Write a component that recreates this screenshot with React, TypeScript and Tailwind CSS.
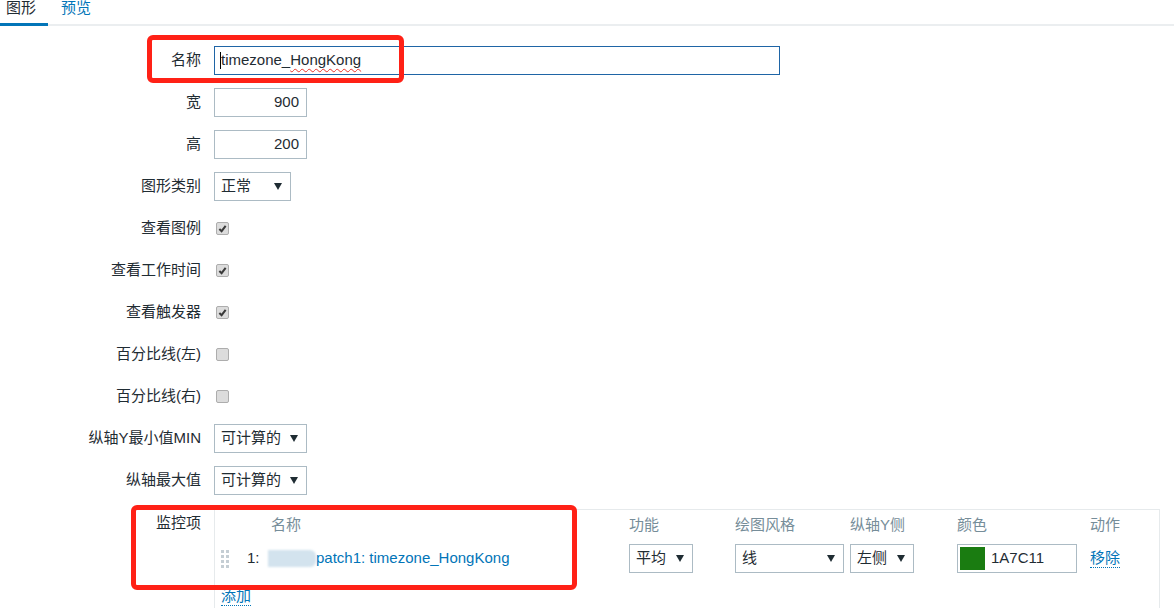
import React from 'react';

const Arrow = () => (
  <svg width="8" height="7" viewBox="0 0 8 7" className="shrink-0">
    <polygon points="0,0 8,0 4,7" fill="#1f2c33" />
  </svg>
);

const Select: React.FC<{ value: string; w: string }> = ({ value, w }) => (
  <div className={`h-[29px] border border-[#acbbc4] bg-white flex items-center justify-between pl-[6px] pr-[8px] ${w}`}>
    <span>{value}</span>
    <Arrow />
  </div>
);

const Checkbox: React.FC<{ checked?: boolean }> = ({ checked }) => (
  <span className="ml-[2px] w-[13px] h-[13px] rounded-[2px] border border-[#adadad] bg-[#dcdcdc] flex items-center justify-center">
    {checked && (
      <svg width="9" height="9" viewBox="0 0 10 10">
        <path d="M1.5 5.5 L4 8 L8.5 2" stroke="#3a3a3a" strokeWidth="2.2" fill="none" />
      </svg>
    )}
  </span>
);

const Row: React.FC<{ label: string; children: React.ReactNode }> = ({ label, children }) => (
  <div className="flex items-center h-[29px]">
    <div className="w-[201px] text-right whitespace-nowrap">{label}</div>
    <div className="ml-[13px] flex items-center">{children}</div>
  </div>
);

const NumInput: React.FC<{ value: string }> = ({ value }) => (
  <div className="w-[93px] h-[29px] border border-[#acbbc4] flex items-center justify-end pr-[7px]">{value}</div>
);

const Handle = () => (
  <div className="grid grid-cols-2 gap-x-[2px] gap-y-[2px] w-[8px]">
    {Array.from({ length: 8 }).map((_, i) => (
      <span key={i} className="w-[3px] h-[3px] bg-[#c5ced4]" />
    ))}
  </div>
);

const App: React.FC = () => {
  return (
    <div className="relative w-[1174px] h-[608px] overflow-hidden bg-white text-[15px] text-[#1f2c33] font-['Liberation_Sans','Noto_Sans_CJK_SC',sans-serif]">
      {/* tabs */}
      <div className="flex h-[26px] border-b-2 border-[#ebeef0]">
        <div className="w-[48px] pl-[6px] leading-[16px] border-b-[3px] border-[#0275b8] -mb-[2px]">图形</div>
        <div className="pl-[13px] leading-[16px] text-[#0275b8]">预览</div>
      </div>

      <div className="flex flex-col gap-[13px] pt-[20px]">
        <Row label="名称">
          <div className="w-[566px] h-[29px] border border-[#1f65a6] flex items-center pl-[5px]">
            <span className="w-[1px] h-[17px] bg-black" />
            <span>timezone_</span>
            <span className="underline decoration-wavy decoration-[#e8322a] decoration-1 underline-offset-[3px]">HongKong</span>
          </div>
        </Row>
        <Row label="宽"><NumInput value="900" /></Row>
        <Row label="高"><NumInput value="200" /></Row>
        <Row label="图形类别"><Select value="正常" w="w-[77px]" /></Row>
        <Row label="查看图例"><Checkbox checked /></Row>
        <Row label="查看工作时间"><Checkbox checked /></Row>
        <Row label="查看触发器"><Checkbox checked /></Row>
        <Row label="百分比线(左)"><Checkbox /></Row>
        <Row label="百分比线(右)"><Checkbox /></Row>
        <Row label="纵轴Y最小值MIN"><Select value="可计算的" w="w-[93px]" /></Row>
        <Row label="纵轴最大值"><Select value="可计算的" w="w-[93px]" /></Row>

        <div className="flex items-start mt-[1px]">
          <div className="w-[201px] text-right pt-[3px]">监控项</div>
          <div className="ml-[13px] w-[946px] h-[120px] border-t border-l border-r border-[#e6eaec] pl-[6px]">
            <div className="grid grid-cols-[26px_21px_361px_106px_115px_107px_133px_1fr] pt-[6px] leading-[18px] text-[#768d99]">
              <span />
              <span />
              <span className="pl-[3px]">名称</span>
              <span>功能</span>
              <span>绘图风格</span>
              <span>纵轴Y侧</span>
              <span>颜色</span>
              <span>动作</span>
            </div>
            <div className="grid grid-cols-[26px_21px_361px_106px_115px_107px_133px_1fr] items-center mt-[10px] h-[29px]">
              <Handle />
              <span>1:</span>
              <span className="flex items-center text-[#0275b8]">
                <span className="w-[48px] h-[17px] bg-[#d3e3ee] blur-[1px] rounded-r-[6px]" />
                <span>patch1: timezone_HongKong</span>
              </span>
              <Select value="平均" w="w-[64px]" />
              <Select value="线" w="w-[109px]" />
              <Select value="左侧" w="w-[64px]" />
              <div className="w-[120px] h-[29px] border border-[#acbbc4] flex items-center pl-[2px]">
                <span className="w-[25px] h-[23px] bg-[#1a7c11]" />
                <span className="ml-[6px]">1A7C11</span>
              </div>
              <span className="text-[#0275b8] leading-[18px] border-b border-dotted border-[#0275b8] w-fit">移除</span>
            </div>
            <div className="mt-[12px]">
              <span className="text-[#0275b8] leading-[18px] border-b border-dotted border-[#0275b8] inline-block">添加</span>
            </div>
          </div>
        </div>
      </div>

      {/* annotation boxes */}
      <div className="absolute left-[147px] top-[35px] w-[257px] h-[48px] border-[5px] border-[#ff2116] rounded-[6px]" />
      <div className="absolute left-[131px] top-[505px] w-[446px] h-[85px] border-[5px] border-[#ff2116] rounded-[6px]" />
    </div>
  );
};

export default App;
